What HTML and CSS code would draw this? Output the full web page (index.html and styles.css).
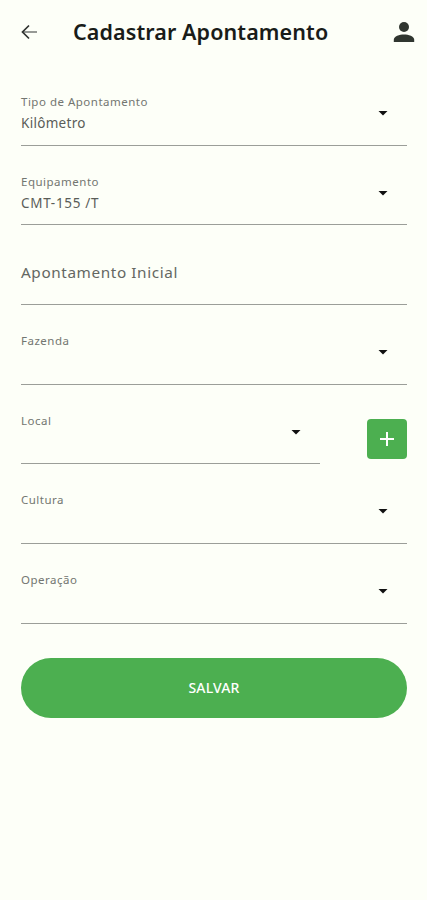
FILE: index.html
```html
<!DOCTYPE html>
<html lang="pt-BR">
<head>
<meta charset="utf-8">
<meta name="viewport" content="width=device-width, initial-scale=1">
<title>Cadastrar Apontamento</title>
<link rel="stylesheet" href="styles.css">
</head>
<body>
<header class="bar">
  <svg class="back" viewBox="0 0 18 16"><path class="shaft" d="M3 8h14"/><path d="M9 1.500 2.500 8 9 14.500"/></svg>
  <h1 class="title">Cadastrar Apontamento</h1>
  <svg class="user" viewBox="0 0 22 22"><circle cx="11" cy="6" r="5"/><path d="M.8 21v-2.300C.8 15.300 6.500 13.500 11 13.500s10.200 1.800 10.200 5.200V21z"/></svg>
</header>
<main class="form">
  <div class="field">
    <div class="text"><span class="label">Tipo de Apontamento</span><span class="value">Kilômetro</span></div>
    <svg class="caret" viewBox="0 0 10 5"><path d="M.5 0h9L5 4.500z"/></svg>
  </div>
  <div class="field">
    <div class="text"><span class="label">Equipamento</span><span class="value value-code">CMT-155 /T</span></div>
    <svg class="caret" viewBox="0 0 10 5"><path d="M.5 0h9L5 4.500z"/></svg>
  </div>
  <div class="field field-input"><span class="placeholder">Apontamento Inicial</span></div>
  <div class="field">
    <div class="text"><span class="label">Fazenda</span></div>
    <svg class="caret" viewBox="0 0 10 5"><path d="M.5 0h9L5 4.500z"/></svg>
  </div>
  <div class="row">
    <div class="field">
      <div class="text"><span class="label">Local</span></div>
      <svg class="caret" viewBox="0 0 10 5"><path d="M.5 0h9L5 4.500z"/></svg>
    </div>
    <button class="add" aria-label="Adicionar"><svg viewBox="0 0 14 14"><path d="M7 0v14M0 7h14"/></svg></button>
  </div>
  <div class="field">
    <div class="text"><span class="label">Cultura</span></div>
    <svg class="caret" viewBox="0 0 10 5"><path d="M.5 0h9L5 4.500z"/></svg>
  </div>
  <div class="field">
    <div class="text"><span class="label">Operação</span></div>
    <svg class="caret" viewBox="0 0 10 5"><path d="M.5 0h9L5 4.500z"/></svg>
  </div>
  <button class="save">SALVAR</button>
</main>
</body>
</html>
```
FILE: styles.css
```css
* { box-sizing: border-box; }
body {
  margin: 0;
  min-height: 900px;
  background: #fdfff8;
  color: #191c19;
  font-family: "Noto Sans", sans-serif;
}
button { border: 0; padding: 0; font: inherit; color: #fff; background: #4caf50; }
svg { display: block; flex: none; }
.bar {
  display: flex;
  align-items: center;
  height: 66px;
  padding: 0 12px 2px 20px;
}
.back { width: 18px; height: 16px; fill: none; stroke: #303330; stroke-width: 1.7; }
.shaft { stroke: #858885; }
.title {
  margin: 0 auto 0 35px;
  font-size: 21.5px;
  font-weight: 600;
  line-height: 30px;
  letter-spacing: 0.1px;
  white-space: nowrap;
}
.user { width: 22px; height: 22px; fill: #303630; }
.form { padding: 0 20px 0 21px; }
.field {
  display: flex;
  justify-content: space-between;
  height: 79.7px;
  padding: 28px 19px 0 0;
  border-bottom: 1px solid #9b9e99;
}
.text { display: flex; flex-direction: column; gap: 3px; }
.label {
  font-size: 11.5px;
  line-height: 16px;
  letter-spacing: 0.5px;
  color: #737671;
}
.value { font-size: 13.5px; line-height: 20px; letter-spacing: 0.3px; color: #5a5d58; }
.value-code { letter-spacing: 0.7px; }
.caret { width: 10px; height: 5px; margin-top: 17px; fill: #111; }
.field-input { padding-top: 34.5px; }
.placeholder {
  font-size: 15.3px;
  line-height: 24px;
  letter-spacing: 0.6px;
  color: #646762;
}
.row { display: flex; justify-content: space-between; }
.row .field { width: 299px; }
.add {
  display: grid;
  place-items: center;
  width: 40px;
  height: 40px;
  margin-top: 34px;
  border-radius: 4px;
}
.add svg { width: 14px; height: 14px; fill: none; stroke: #fff; stroke-width: 2; }
.save {
  display: block;
  width: 100%;
  height: 60px;
  margin-top: 34px;
  border-radius: 30px;
  font-size: 14px;
  font-weight: 500;
  letter-spacing: 0.15px;
}
```
